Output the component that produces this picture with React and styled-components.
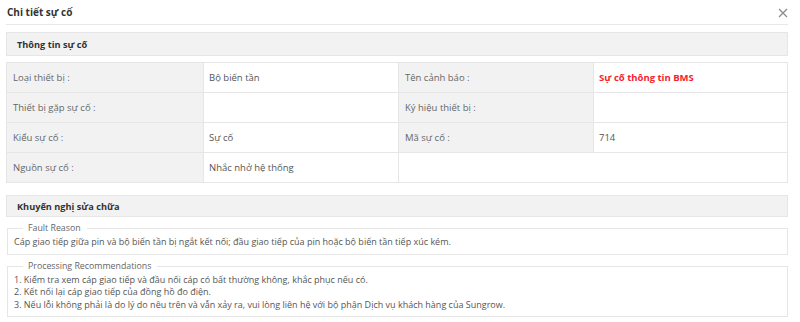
import React from "react";
import styled, { createGlobalStyle } from "styled-components";

const Global = createGlobalStyle`
  html, body { margin: 0; padding: 0; background: #fff; }
  body { font-family: "Open Sans", "Noto Sans", sans-serif; color: #555; }
  * { box-sizing: border-box; }
`;

const Dialog = styled.div`
  width: 800px;
  height: 322px;
  padding: 0 12px 0 6px;
  display: flex;
  flex-direction: column;
`;

const Header = styled.div`
  height: 25px;
  display: flex;
  align-items: center;
  justify-content: space-between;
  border-bottom: 1px solid #e8e8e8;
  padding: 0 0 1px 1px;
`;

const Title = styled.div`
  font-size: 10px;
  font-weight: 700;
  color: #333;
`;

const Close = styled.button`
  border: 0;
  background: none;
  padding: 0;
  width: 12px;
  height: 12px;
  display: flex;
  align-items: center;
  justify-content: center;
  margin-right: -1px;
  margin-top: 2px;
`;

const SectionHead = styled.div`
  margin-top: ${(p) => p.$top}px;
  height: ${(p) => p.$h}px;
  background: #f2f2f2;
  border: 1px solid #e6e6e6;
  display: flex;
  align-items: center;
  padding-left: 10px;
  font-size: 9.2px;
  font-weight: 700;
  color: #333;
`;

const Table = styled.div`
  margin-top: 6px;
  display: grid;
  grid-template-columns: 197px 195px 195px 1fr;
  border-top: 1px solid #e6e6e6;
  border-left: 1px solid #e6e6e6;
`;

const Cell = styled.div`
  height: 30px;
  display: flex;
  align-items: center;
  padding-left: ${(p) => (p.$label ? 6 : 5)}px;
  font-size: 9.5px;
  background: ${(p) => (p.$label ? "#f2f2f2" : "#fff")};
  color: ${(p) => (p.$red ? "#f5222d" : p.$label ? "#666" : "#555")};
  font-weight: ${(p) => (p.$red ? 700 : 400)};
  border-right: 1px solid #e6e6e6;
  border-bottom: 1px solid #e6e6e6;
  grid-column: ${(p) => (p.$span ? `span ${p.$span}` : "auto")};
`;

const Box = styled.fieldset`
  margin: ${(p) => p.$top}px 0 0 1px;
  border: 1px solid #e6e6e6;
  padding: 2px 6px 5px 6px;
  font-size: 9px;
  line-height: 12.5px;
  color: #555;
`;

const Legend = styled.legend`
  margin-left: 9px;
  padding: 0 6px 0 5px;
  font-size: 8.8px;
  color: #666;
  line-height: 11px;
`;

const Line = styled.div`
  white-space: nowrap;
`;

const rows = [
  [
    { t: "Loại thiết bị :", label: true },
    { t: "Bộ biến tần" },
    { t: "Tên cảnh báo :", label: true },
    { t: "Sự cố thông tin BMS", red: true },
  ],
  [
    { t: "Thiết bị gặp sự cố :", label: true },
    { t: "" },
    { t: "Ký hiệu thiết bị :", label: true },
    { t: "" },
  ],
  [
    { t: "Kiểu sự cố :", label: true },
    { t: "Sự cố" },
    { t: "Mã sự cố :", label: true },
    { t: "714" },
  ],
  [
    { t: "Nguồn sự cố :", label: true },
    { t: "Nhắc nhở hệ thống" },
    { t: "", span: 2 },
  ],
];

export default function App() {
  return (
    <>
      <Global />
      <Dialog>
        <Header>
          <Title>Chi tiết sự cố</Title>
          <Close aria-label="close">
            <svg width="10" height="10" viewBox="0 0 10 10">
              <path d="M1 1L9 9M9 1L1 9" stroke="#8c8c8c" strokeWidth="1.3" fill="none" />
            </svg>
          </Close>
        </Header>
        <SectionHead $top={7} $h={24}>Thông tin sự cố</SectionHead>
        <Table>
          {rows.flat().map((c, i) => (
            <Cell key={i} $label={c.label} $red={c.red} $span={c.span}>
              {c.t}
            </Cell>
          ))}
        </Table>
        <SectionHead $top={12} $h={22}>Khuyến nghị sửa chữa</SectionHead>
        <Box $top={6}>
          <Legend>Fault Reason</Legend>
          <Line>
            Cáp giao tiếp giữa pin và bộ biến tần bị ngắt kết nối; đầu giao tiếp của pin hoặc bộ biến tần tiếp xúc kém.
          </Line>
        </Box>
        <Box $top={6}>
          <Legend>Processing Recommendations</Legend>
          <Line>1. Kiểm tra xem cáp giao tiếp và đầu nối cáp có bất thường không, khắc phục nếu có.</Line>
          <Line>2. Kết nối lại cáp giao tiếp của đồng hồ đo điện.</Line>
          <Line>3. Nếu lỗi không phải là do lý do nêu trên và vẫn xảy ra, vui lòng liên hệ với bộ phận Dịch vụ khách hàng của Sungrow.</Line>
        </Box>
      </Dialog>
    </>
  );
}
